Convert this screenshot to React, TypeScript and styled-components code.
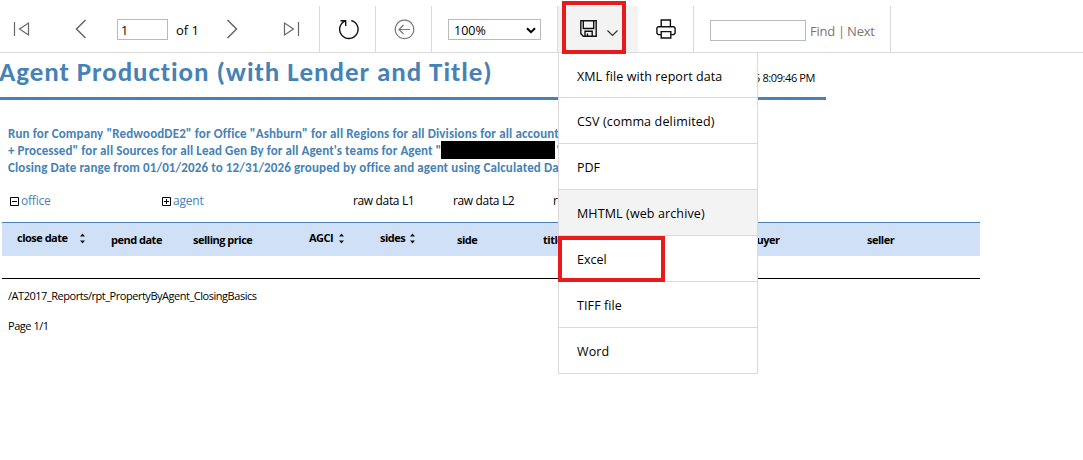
import React from "react";
import styled, { createGlobalStyle } from "styled-components";

const Global = createGlobalStyle`
  * { box-sizing: border-box; }
  body { margin: 0; background: #fff; overflow: hidden; }
`;

const ui = `"Segoe UI", "Open Sans", sans-serif`;
const heading = `Calibri, Lato, sans-serif`;

const Page = styled.div`
  position: relative;
  width: 1083px;
  height: 460px;
  overflow: hidden;
  font-family: ${ui};
  color: #000;
  white-space: nowrap;
`;

const Toolbar = styled.div`
  display: flex;
  height: 53px;
  padding-top: 6px;
  border-bottom: 1px solid #dadada;
`;

const Group = styled.div<{ $width: number }>`
  display: flex;
  align-items: center;
  width: ${(p) => p.$width}px;
  height: 46px;
  border-right: 1px solid #dadada;
  font-size: 13px;
`;

const IconButton = styled.span<{ $left: number }>`
  display: flex;
  margin-left: ${(p) => p.$left}px;
`;

const Field = styled.span<{ $width: number; $left: number; $top?: number }>`
  display: flex;
  align-items: center;
  justify-content: space-between;
  width: ${(p) => p.$width}px;
  height: 21px;
  margin-left: ${(p) => p.$left}px;
  margin-top: ${(p) => p.$top ?? 0}px;
  padding: 2px 4px 0 3px;
  border: 1px solid #bababa;
  font-size: 12.5px;
  line-height: 17px;
`;

const Label = styled.span<{ $left?: number; $top?: number; $spacing?: number; $color?: string }>`
  margin-left: ${(p) => p.$left ?? 0}px;
  padding-top: ${(p) => p.$top ?? 3}px;
  letter-spacing: ${(p) => p.$spacing ?? 0}px;
  color: ${(p) => p.$color ?? "#000"};
`;

const SaveButton = styled.div`
  display: flex;
  width: 80px;
  height: 46px;
  padding: 14px 0 0 22px;
  gap: 10px;
  background: #f3f3f3;
`;

const Menu = styled.div`
  position: absolute;
  left: 558px;
  top: 52px;
  width: 200px;
  border: 1px solid #dadada;
  border-bottom: 0;
  background: #fff;
`;

const MenuItem = styled.div<{ $active?: boolean; $spacing: number }>`
  height: 46px;
  padding-left: 18px;
  border-bottom: 1px solid #dadada;
  background: ${(p) => (p.$active ? "#f3f3f3" : "#fff")};
  font-size: 12.5px;
  line-height: 47px;
  letter-spacing: ${(p) => p.$spacing}px;
  &:first-child { height: 45px; }
`;

const Highlight = styled.div<{ $x: number; $y: number; $w: number; $h: number }>`
  position: absolute;
  left: ${(p) => p.$x}px;
  top: ${(p) => p.$y}px;
  width: ${(p) => p.$w}px;
  height: ${(p) => p.$h}px;
  border: 4px solid #e81a1c;
`;

const TitleBar = styled.header`
  display: flex;
  justify-content: space-between;
  width: 826px;
  height: 47px;
  padding-right: 11px;
  border-bottom: 3px solid #4682b4;
`;

const Title = styled.h1`
  margin: 0 0 0 -1px;
  font: bold 27px/38px ${heading};
  letter-spacing: 0.93px;
  color: #4682b4;
`;

const RunTime = styled.span`
  font-size: 11px;
  line-height: 50px;
  letter-spacing: -0.4px;
`;

const Summary = styled.div`
  margin: 25px 0 0 8px;
  color: #4682b4;
`;

const SummaryLine = styled.div<{ $spacing: number }>`
  display: flex;
  height: 17px;
  font: bold 13px/17px ${heading};
  letter-spacing: ${(p) => p.$spacing}px;
`;

const Redacted = styled.span`
  width: 114px;
  height: 18px;
  margin: -1px 1px 0 0;
  background: #000;
`;

const Toggles = styled.div`
  display: grid;
  grid-template-columns: 152px 191px 100px 100px 100px;
  align-items: start;
  height: 46px;
  margin: 0 0 0 10px;
  padding-top: 15px;
  font-size: 12px;
  line-height: 20px;
  letter-spacing: -0.35px;
`;

const Toggle = styled.span`
  display: flex;
  align-items: center;
  gap: 2px;
  height: 20px;
  letter-spacing: -0.2px;
  color: #4682b4;
`;

const Head = styled.div`
  display: grid;
  grid-template-columns: 94px 82px 116px 71px 77px 86px 207px 117px 1fr;
  width: 978px;
  height: 34px;
  margin-left: 2px;
  padding-left: 15px;
  border-top: 1px solid #4682b4;
  background: #d0e0f6;
  font-size: 11px;
  font-weight: 700;
  line-height: 34px;
  letter-spacing: -0.5px;
`;

const HeadCell = styled.span<{ $gap?: number }>`
  display: flex;
  gap: ${(p) => p.$gap ?? 0}px;
  height: 33px;
  line-height: ${(p) => (p.$gap ? 30 : 34)}px;
  svg { margin-top: 10px; }
`;

const EmptyRow = styled.div`
  width: 978px;
  height: 23px;
  margin-left: 2px;
  border-bottom: 1px solid #000;
`;

const Footer = styled.footer`
  padding: 2px 0 0 8px;
  font-size: 11px;
  line-height: 30px;
  letter-spacing: -0.47px;
`;

const Glyph = ({ w, h, d, color = "#666", sw = 1.2 }: { w: number; h: number; d: string; color?: string; sw?: number }) => (
  <svg width={w} height={h} viewBox={`0 0 ${w} ${h}`} fill="none" stroke={color} strokeWidth={sw}>
    <path d={d} />
  </svg>
);

const Box = ({ plus }: { plus?: boolean }) => (
  <Glyph w={9} h={9} sw={1} color="#000" d={"M.5.5h8v8h-8zM2 4.5h5" + (plus ? "M4.5 2v5" : "")} />
);

const Sort = () => (
  <svg width="7" height="11" viewBox="0 0 7 11" fill="#111">
    <path d="M1 3.5 3.5 .5 6 3.5zM1 7.5h5l-2.5 3z" />
  </svg>
);

const formats: [string, number][] = [
  ["XML file with report data", 0.08],
  ["CSV (comma delimited)", 0.15],
  ["PDF", 0],
  ["MHTML (web archive)", 0.12],
  ["Excel", 0],
  ["TIFF file", 0.1],
  ["Word", 0.1],
];

export default function App() {
  return (
    <Page>
      <Global />
      <Toolbar>
        <Group $width={320}>
          <IconButton $left={13}><Glyph w={17} h={16} d="M1.5 1v14M15.5 2v12L6.5 8z" /></IconButton>
          <IconButton $left={45}><Glyph w={12} h={20} sw={1.5} d="M10.5 1 1.5 10l9 9" /></IconButton>
          <Field $width={51} $left={30}>1</Field>
          <Label $left={8} $top={2}>of 1</Label>
          <IconButton $left={27}><Glyph w={12} h={20} sw={1.5} d="M1.5 1l9 9-9 9" /></IconButton>
          <IconButton $left={45}><Glyph w={17} h={16} d="M15.5 1v14M1.5 2v12l9-6z" /></IconButton>
        </Group>
        <Group $width={56}>
          <IconButton $left={18}>
            <Glyph w={21} h={21} sw={1.4} color="#111" d="M13.3 1.5A9.2 9.2 0 1 1 7.5 1.8M2.5 1.7h5.2v5.4" />
          </IconButton>
        </Group>
        <Group $width={56}>
          <IconButton $left={18}>
            <Glyph w={21} h={21} color="#777" d="M10.5 1.2a9.2 9.2 0 1 0 .01 0zM16 10.5H5M9.5 6 5 10.5 9.5 15" />
          </IconButton>
        </Group>
        <Group $width={126}>
          <Field $width={93} $left={16}>
            <Label $left={2} $top={1}>100%</Label>
            <Glyph w={10} h={7} sw={2} color="#000" d="M1 1.2l4 4 4-4" />
          </Field>
        </Group>
        <SaveButton>
          <Glyph w={17} h={17} sw={1.4} color="#111" d="M.8.8h15.4v15.4H3.3L.8 13.7zM3.3 1v7.5h10.4V1M5 16v-4.7h7.2V16M7.5 13.5V16" />
          <svg width="12" height="22" viewBox="0 0 12 22" fill="none" stroke="#333" strokeWidth="1.2"><path d="M.5 10.5l5 5 5-5" /></svg>
        </SaveButton>
        <Group $width={56}>
          <IconButton $left={18}>
            <Glyph w={20} h={20} sw={1.4} color="#111" d="M5.2 7.7V1h9.2v6.7M5 15.6H2.2L.9 14.3V9L2.2 7.7h15.6L19.1 9v5.3l-1.3 1.3H15M5.2 12.6h9.6V19H5.2z" />
          </IconButton>
        </Group>
        <Group $width={197}>
          <Field $width={96} $left={16} $top={3} />
          <Label $left={4} $spacing={-0.25} $color="#777">Find</Label>
          <Label $left={3} $color="#b8651b">|</Label>
          <Label $left={2} $spacing={-0.2} $color="#777">Next</Label>
        </Group>
      </Toolbar>

      <TitleBar>
        <Title>Agent Production (with Lender and Title)</Title>
        <RunTime>5 8:09:46 PM</RunTime>
      </TitleBar>
      <Summary>
        <SummaryLine $spacing={0.13}>Run for Company "RedwoodDE2" for Office "Ashburn" for all Regions for all Divisions for all account</SummaryLine>
        <SummaryLine $spacing={0.08}>+ Processed" for all Sources for all Lead Gen By for all Agent's teams for Agent "<Redacted />"</SummaryLine>
        <SummaryLine $spacing={0.12}>Closing Date range from 01/01/2026 to 12/31/2026 grouped by office and agent using Calculated Da</SummaryLine>
      </Summary>
      <Toggles>
        <Toggle><Box />office</Toggle>
        <Toggle><Box plus />agent</Toggle>
        <span>raw data L1</span>
        <span>raw data L2</span>
        <span>r</span>
      </Toggles>
      <Head>
        <HeadCell $gap={11}>close date<Sort /></HeadCell>
        <HeadCell>pend date</HeadCell>
        <HeadCell>selling price</HeadCell>
        <HeadCell $gap={5}>AGCI<Sort /></HeadCell>
        <HeadCell $gap={4}>sides<Sort /></HeadCell>
        <HeadCell>side</HeadCell>
        <HeadCell>title</HeadCell>
        <HeadCell>buyer</HeadCell>
        <HeadCell>seller</HeadCell>
      </Head>
      <EmptyRow />
      <Footer>
        <div>/AT2017_Reports/rpt_PropertyByAgent_ClosingBasics</div>
        <div>Page 1/1</div>
      </Footer>

      <Menu>
        {formats.map(([name, spacing]) => (
          <MenuItem key={name} $spacing={spacing} $active={name.startsWith("MHTML")}>{name}</MenuItem>
        ))}
      </Menu>
      <Highlight $x={562} $y={1} $w={64} $h={53} />
      <Highlight $x={558} $y={236} $w={107} $h={46} />
    </Page>
  );
}
